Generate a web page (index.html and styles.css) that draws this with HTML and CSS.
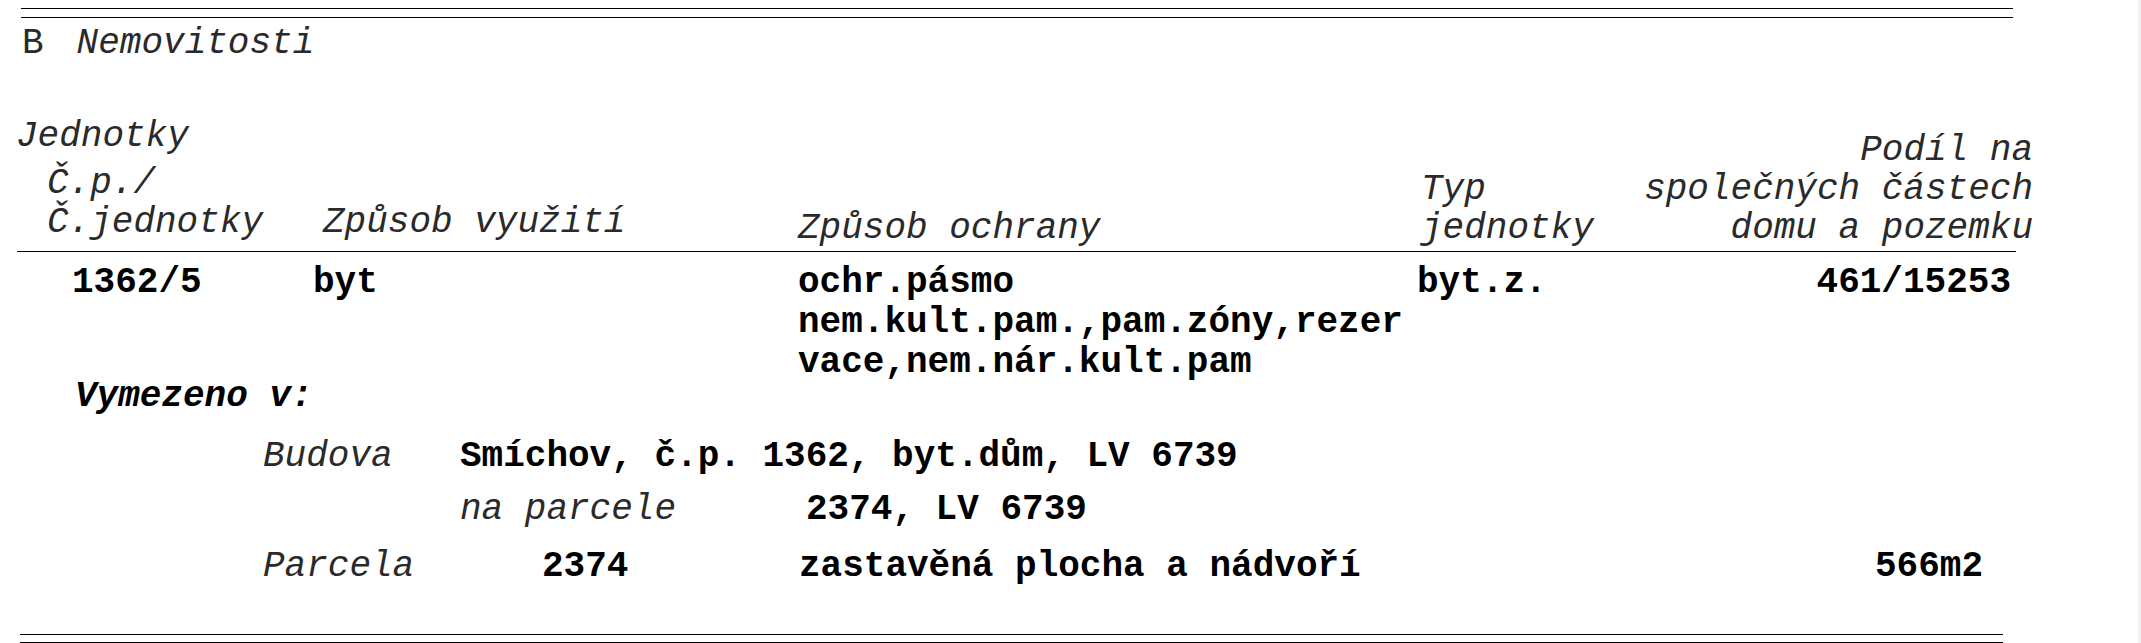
FILE: index.html
```html
<!DOCTYPE html>
<html lang="cs">

<head>
    <meta charset="UTF-8">
    <title>B Nemovitosti</title>
    <link rel="stylesheet" href="styles.css">
</head>

<body>

    <div class="rule-double rule-top"></div>

    <div class="section-title">
        <span class="section-letter">B</span><span class="section-name">Nemovitosti</span>
    </div>

    <div class="table-head">
        <div class="th th-unit">
            <div class="th-group">Jednotky</div>
            <div class="th-sub">Č.p./<br>Č.jednotky</div>
        </div>
        <div class="th th-use">Způsob využití</div>
        <div class="th th-protect">Způsob ochrany</div>
        <div class="th th-type">Typ<br>jednotky</div>
        <div class="th th-share">Podíl na<br>společných částech<br>domu a pozemku</div>
    </div>

    <div class="table-row">
        <div class="td td-unit">1362/5</div>
        <div class="td td-use">byt</div>
        <div class="td td-protect">
            <div>ochr.pásmo</div>
            <div class="wrap">nem.kult.pam.,pam.zóny,rezervace,nem.nár.kult.pam</div>
        </div>
        <div class="td td-type">byt.z.</div>
        <div class="td td-share">461/15253</div>
    </div>

    <div class="defined-title">Vymezeno v:</div>

    <div class="defined-row row-building">
        <span class="label label-building">Budova</span>
        <span class="value">Smíchov, č.p. 1362, byt.dům, LV 6739</span>
    </div>

    <div class="defined-row row-on-parcel">
        <span class="label label-on-parcel">na parcele</span>
        <span class="value">2374, LV 6739</span>
    </div>

    <div class="defined-row row-parcel">
        <span class="label label-parcel">Parcela</span>
        <span class="value parcel-number">2374</span>
        <span class="value parcel-kind">zastavěná plocha a nádvoří</span>
        <span class="value parcel-area">566m2</span>
    </div>

    <div class="rule-double rule-bottom"></div>

</body>

</html>
```

FILE: styles.css
```css
html {
    background: #fff;
}

body {
    margin: 0;
    min-height: 100vh;
    box-sizing: border-box;
    border-right: 3px solid #f0f0f0;
    font-family: 'Liberation Mono', 'Courier New', monospace;
    font-size: 36px;
    line-height: 40px;
    color: #000;
}

.rule-double {
    border-top: 1px solid #000;
    border-bottom: 1px solid #000;
}

.rule-top {
    margin: 8px 0 0 21px;
    width: 1992px;
    height: 8px;
}

.rule-bottom {
    margin: 47px 0 0 20px;
    width: 1983px;
    height: 7px;
}

/* section heading */
.section-title {
    margin-top: 6px;
    padding-left: 22px;
    color: #2a2a2a;
}

.section-name {
    font-style: italic;
    margin-left: 33px;
}

/* column headings */
.table-head {
    display: grid;
    grid-template-columns: 305px 476px 623px 1fr auto;
    align-items: end;
    margin: 53px 0 0 17px;
    width: 1999px;
    border-bottom: 1px solid #000;
    font-style: italic;
    line-height: 39px;
    color: #2a2a2a;
}

.th {
    padding-bottom: 3px;
}

.th-unit,
.th-use {
    padding-bottom: 9px;
}

.th-group {
    margin-left: -1px;
    margin-bottom: 8px;
}

.th-sub {
    padding-left: 30px;
}

.th-use {
    padding-left: 1px;
}

.th-share {
    text-align: right;
    margin-right: -17px;
}

/* data row */
.table-row {
    display: grid;
    grid-template-columns: 296px 485px 619px 1fr auto;
    margin-left: 17px;
    width: 1999px;
    padding-top: 11px;
    font-weight: bold;
}

.td-unit {
    padding-left: 55px;
}

.td-protect .wrap {
    width: 28ch;
    word-break: break-all;
}

.td-share {
    text-align: right;
    padding-right: 5px;
}

/* vymezeno v */
.defined-title {
    margin-top: -6px;
    padding-left: 75px;
    font-weight: bold;
    font-style: italic;
}

.defined-row {
    display: flex;
}

.label {
    font-style: italic;
    color: #2a2a2a;
}

.value {
    font-weight: bold;
}

.row-building {
    margin-top: 20px;
    padding-left: 263px;
}

.label-building {
    width: 197px;
}

.row-on-parcel {
    margin-top: 13px;
    padding-left: 460px;
}

.label-on-parcel {
    width: 346px;
}

.row-parcel {
    margin-top: 17px;
    padding-left: 263px;
    width: 1983px;
    box-sizing: border-box;
}

.label-parcel {
    width: 279px;
}

.parcel-number {
    width: 257px;
}

.parcel-kind {
    flex: 1;
}
```
